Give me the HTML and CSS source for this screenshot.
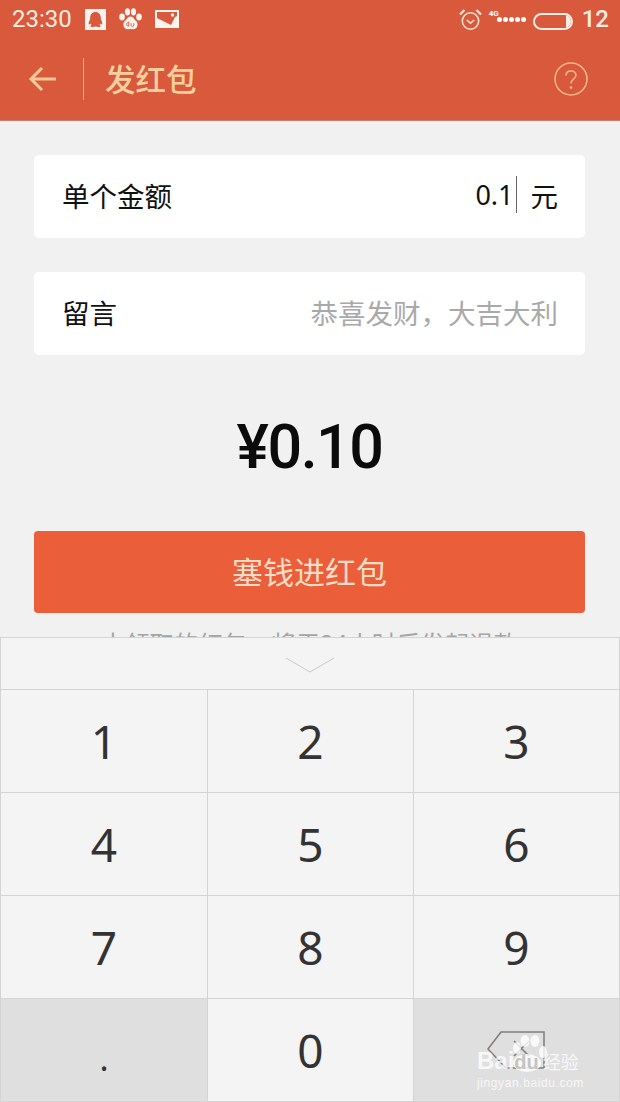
FILE: index.html
```html
<!DOCTYPE html>
<html lang="zh-CN">
<head>
    <meta charset="UTF-8">
    <meta name="viewport" content="width=device-width, initial-scale=1.0">
    <title>发红包</title>
    <link rel="stylesheet" href="styles.css">
</head>
<body>
    <div class="status-bar">
        <span class="status-time">23:30</span>
        <svg class="status-icon" width="21" height="21" viewBox="0 0 21 21">
            <rect width="21" height="21" fill="#fbf3ee"/>
            <path d="M10.500 3c-3.400 0-5.300 2.500-5.300 5.600 0 1.400-.3 2.300-.9 3.500-.7 1.400-.9 3.200-.2 3.300.5.100 1-.4 1.400-1 .3.700.7 1.300 1.200 1.700-.9.400-1.400.9-1.200 1.400.3.700 3.300.7 5 .1 1.700.6 4.700.6 5-.1.200-.5-.3-1-1.200-1.400.5-.4.900-1 1.200-1.700.4.600.9 1.100 1.400 1 .7-.1.500-1.900-.2-3.300-.6-1.200-.9-2.100-.9-3.500C15.800 5.500 13.900 3 10.500 3z" fill="#d9593d"/>
        </svg>
        <svg class="status-icon" width="23" height="22" viewBox="0 0 23 22">
            <g fill="#fbf3ee">
                <ellipse cx="3" cy="9" rx="2.800" ry="3.400"/>
                <ellipse cx="8.500" cy="3.800" rx="2.600" ry="3.600"/>
                <ellipse cx="14.500" cy="3.800" rx="2.600" ry="3.600"/>
                <ellipse cx="20" cy="9" rx="2.800" ry="3.400"/>
                <path d="M11.500 8.500c-3 0-3.500 3-5.800 4.800-2.300 1.800-1.500 8 3 8 1.200 0 1.900-.4 2.800-.4s1.600.4 2.800.4c4.500 0 5.300-6.200 3-8-2.300-1.800-2.800-4.800-5.800-4.800z"/>
            </g>
            <path d="M9.800 13.500v5M9.800 15a1.500 1.500 0 1 0 0 2.500M12 15.200v1.900a1.400 1.400 0 0 0 2.800 0v-1.900" fill="none" stroke="#d9593d" stroke-width=".9"/>
        </svg>
        <svg class="status-icon" width="24" height="18" viewBox="0 0 24 18">
            <rect width="24" height="18" fill="#fbf3ee"/>
            <path d="M2 2H22V6L20 7L16 15L2 8Z" fill="#d9593d"/>
            <circle cx="17.500" cy="5" r="1.700" fill="#fbf3ee"/>
        </svg>
        <div class="status-right">
            <svg width="23" height="23" viewBox="0 0 23 23" fill="none" stroke="#f8e3d0" stroke-width="1.600">
                <circle cx="11.500" cy="13" r="8.200"/>
                <path d="M7.800 12l3.700 3.200 3.700-3.200"/>
                <path d="M1 6.500L5.500 2M22 6.500L17.500 2" stroke-width="2.200"/>
            </svg>
            <div class="signal">
                <span class="signal-label">4G</span>
                <span class="signal-dots"><i></i><i></i><i></i><i></i><i></i></span>
            </div>
            <div class="battery"><div class="battery-fill"></div></div>
            <span class="status-level">12</span>
        </div>
    </div>

    <div class="title-bar">
        <svg class="back-icon" width="28" height="26" viewBox="0 0 28 26" fill="none" stroke="#f6c998" stroke-width="3">
            <path d="M14 2L3 13l11 11M3 13h25"/>
        </svg>
        <div class="title-divider"></div>
        <h1 class="title">发红包</h1>
        <svg class="help-icon" width="34" height="34" viewBox="0 0 34 34" fill="none" stroke="#f6b98a" stroke-width="1.500">
            <circle cx="17" cy="17" r="16"/>
            <path d="M12 13.500c0-2.800 2.200-4.500 5-4.500s5 1.700 5 4.300c0 3.700-5 3.700-5 8.200"/>
            <circle cx="17" cy="25.500" r="1.300" fill="#f6b98a" stroke="none"/>
        </svg>
    </div>

    <main class="content">
        <div class="field">
            <span class="field-label">单个金额</span>
            <span class="amount">0.1</span>
            <span class="caret"></span>
            <span class="unit">元</span>
        </div>
        <div class="field">
            <span class="field-label">留言</span>
            <span class="placeholder">恭喜发财，大吉大利</span>
        </div>
        <div class="total">¥0.10</div>
        <button class="submit-btn">塞钱进红包</button>
        <p class="note">未领取的红包，将于24小时后发起退款</p>
    </main>

    <div class="keyboard">
        <div class="keyboard-top">
            <svg width="50" height="16" viewBox="0 0 50 16" fill="none" stroke="#c9c9c9" stroke-width="1">
                <path d="M1 1l24 14L49 1"/>
            </svg>
        </div>
        <div class="keys">
            <div class="key">1</div>
            <div class="key">2</div>
            <div class="key">3</div>
            <div class="key">4</div>
            <div class="key">5</div>
            <div class="key">6</div>
            <div class="key">7</div>
            <div class="key">8</div>
            <div class="key">9</div>
            <div class="key key-dark key-dot">.</div>
            <div class="key">0</div>
            <div class="key key-dark key-del">
                <svg width="58" height="38" viewBox="0 0 58 38" fill="none" stroke="#7d7d7d" stroke-width="1.500">
                    <path d="M57 1H14L1 18l18 19h38z"/>
                    <path d="M27 10l15 15M42 10L27 25"/>
                </svg>
            </div>
        </div>
        <div class="watermark">
            <svg class="wm-paw" width="42" height="40" viewBox="0 0 42 40" fill="#fff" fill-opacity=".8">
                <ellipse cx="15" cy="7" rx="4.500" ry="6"/>
                <ellipse cx="25" cy="7" rx="4.500" ry="6"/>
                <ellipse cx="7" cy="14" rx="4" ry="6"/>
                <ellipse cx="33" cy="18" rx="4" ry="6"/>
                <ellipse cx="17" cy="29" rx="14" ry="9"/>
            </svg>
            <div class="wm-logo"><span class="wm-bai">Bai</span><span class="wm-du">du</span><span class="wm-jy">经验</span></div>
            <div class="wm-url">jingyan.baidu.com</div>
        </div>
    </div>
</body>
</html>
```
FILE: styles.css
```css
* {
    box-sizing: border-box;
}
html, body {
    margin: 0;
    padding: 0;
}
body {
    width: 620px;
    height: 1102px;
    overflow: hidden;
    position: relative;
    background-color: #f1f1f1;
    font-family: 'Noto Sans CJK SC', 'Roboto', sans-serif;
    color: #111;
}
.status-bar {
    height: 40px;
    background-color: #d9593d;
    display: flex;
    align-items: center;
    padding: 0 11px 2px 12px;
    color: #f9ece2;
}
.status-time {
    font-family: 'Roboto', sans-serif;
    font-size: 24px;
    margin-right: 13px;
}
.status-icon {
    margin-right: 13px;
}
.status-right {
    margin-left: auto;
    display: flex;
    align-items: center;
}
.signal {
    width: 43px;
    margin-left: 6px;
    position: relative;
    height: 20px;
}
.signal-label {
    position: absolute;
    left: 1px;
    top: 0;
    font-family: 'Roboto', sans-serif;
    font-size: 8px;
    font-weight: 700;
    color: #fff;
}
.signal-dots {
    position: absolute;
    left: 9px;
    top: 8px;
    display: flex;
    gap: 1px;
}
.signal-dots i {
    width: 5px;
    height: 5px;
    border-radius: 50%;
    background-color: #fff;
}
.battery {
    width: 40px;
    height: 17px;
    margin: 4px 0 0 2px;
    border: 2px solid #fbeee4;
    border-radius: 9px;
    overflow: hidden;
    display: flex;
    justify-content: flex-end;
}
.battery-fill {
    width: 5px;
    background-color: #fbeee4;
}
.status-level {
    font-family: 'Roboto', sans-serif;
    font-size: 24px;
    font-weight: 500;
    margin-left: 9px;
}
.title-bar {
    height: 81px;
    background-color: #d9593d;
    border-bottom: 1px solid #c9806c;
    display: flex;
    align-items: center;
    padding: 0 32px 3px 28px;
}
.title-divider {
    width: 1px;
    height: 42px;
    background-color: #eeb08a;
    margin-left: 27px;
    margin-right: 21px;
}
.title {
    margin: 0 0 2px;
    font-size: 30.500px;
    font-weight: 500;
    color: #f6cf9f;
}
.help-icon {
    margin-left: auto;
}
.content {
    padding: 34px 35px 0 34px;
}
.field {
    height: 83px;
    margin-bottom: 34px;
    padding: 0 27px 4px 28px;
    background-color: #fff;
    border-radius: 5px;
    display: flex;
    align-items: center;
    font-size: 27.500px;
}
.field-label {
    margin-right: auto;
}
.amount {
    font-family: 'Noto Sans', sans-serif;
    font-size: 27px;
}
.caret {
    width: 1px;
    height: 37px;
    margin: 0 14px 0 2px;
    background-color: #666;
}
.placeholder {
    color: #a9a9a9;
}
.total {
    margin-top: 57px;
    text-align: center;
    font-family: 'Roboto', sans-serif;
    font-size: 61px;
    font-weight: 500;
    line-height: 70px;
    letter-spacing: -1.500px;
    color: #0b0b0b;
}
.submit-btn {
    display: block;
    width: 100%;
    height: 82px;
    margin-top: 49px;
    padding: 0 0 3px;
    border: none;
    border-radius: 4px;
    background-color: #ea5f39;
    color: #f9dcc8;
    font-family: inherit;
    font-size: 31px;
}
.note {
    margin: 12px 0 0;
    text-align: center;
    font-size: 24.400px;
    color: #a5a5a5;
}
.keyboard {
    position: absolute;
    left: 0;
    top: 637px;
    width: 620px;
    height: 465px;
    background-color: #f4f4f4;
    border-top: 1px solid #d4d4d4;
}
.keyboard-top {
    height: 51px;
    display: flex;
    justify-content: center;
    align-items: center;
    padding-top: 3px;
    border-left: 1px solid #d4d4d4;
    border-right: 1px solid #d4d4d4;
}
.keys {
    display: grid;
    grid-template-columns: 207px 206px 207px;
    grid-auto-rows: 103px;
    border-top: 1px solid #d4d4d4;
}
.key {
    display: flex;
    justify-content: center;
    align-items: center;
    font-family: 'Noto Sans', sans-serif;
    font-size: 46px;
    color: #333;
    border-left: 1px solid #d4d4d4;
    border-bottom: 1px solid #d4d4d4;
}
.key:nth-child(3n) {
    border-right: 1px solid #d4d4d4;
}
.key-dark {
    background-color: #dfdfdf;
}
.key-dot {
    align-items: flex-end;
    padding-bottom: 26px;
    line-height: 1;
    font-size: 34px;
}
.key-del svg {
    margin-left: -1px;
}
.watermark {
    position: absolute;
    left: 477px;
    top: 411px;
    width: 120px;
    color: rgba(255, 255, 255, 0.75);
}
.wm-paw {
    position: absolute;
    left: 33px;
    top: -15px;
}
.wm-logo {
    position: relative;
    display: flex;
    align-items: baseline;
    font-family: 'Liberation Sans', sans-serif;
    font-weight: 700;
    line-height: 24px;
}
.wm-bai {
    font-size: 24px;
}
.wm-du {
    font-size: 20px;
    margin-right: 4px;
    color: #c4c4c4;
}
.wm-jy {
    font-family: 'Noto Sans CJK SC', sans-serif;
    font-weight: 400;
    font-size: 18px;
}
.wm-url {
    font-family: 'Liberation Sans', sans-serif;
    font-size: 12px;
    letter-spacing: 0.6px;
    margin-top: 2px;
}
```
